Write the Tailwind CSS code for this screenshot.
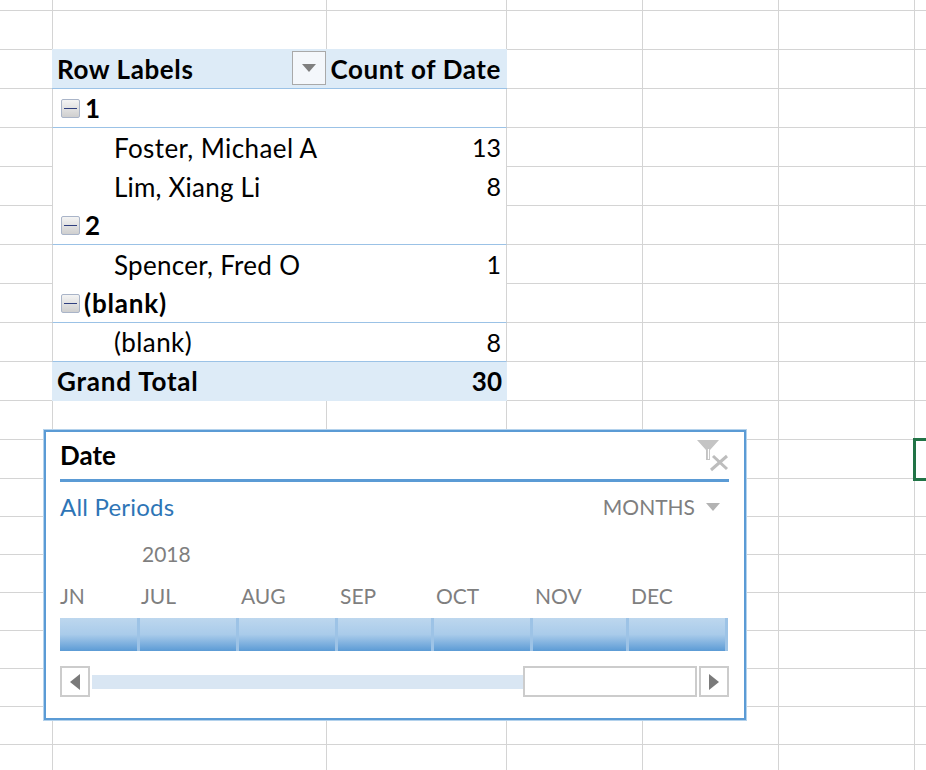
<!DOCTYPE html>
<html lang="en">
<head>
    <meta charset="UTF-8">
    <title>Pivot table and slicer</title>
    <script src="https://cdn.jsdelivr.net/npm/@tailwindcss/browser@4"></script>
</head>
<body class="bg-white" style="font-family:Lato,'Open Sans',sans-serif">
    <div class="relative w-[926px] h-[770px] overflow-hidden text-black">

        <!-- sheet gridlines -->
        <div class="absolute inset-0 flex flex-col">
            <div class="h-[11px] shrink-0 border-b border-[#d4d4d4]"></div>
            <div class="h-[39px] shrink-0 border-b border-[#d4d4d4]"></div>
            <div class="h-[39px] shrink-0 border-b border-[#d4d4d4]"></div>
            <div class="h-[39px] shrink-0 border-b border-[#d4d4d4]"></div>
            <div class="h-[39px] shrink-0 border-b border-[#d4d4d4]"></div>
            <div class="h-[39px] shrink-0 border-b border-[#d4d4d4]"></div>
            <div class="h-[39px] shrink-0 border-b border-[#d4d4d4]"></div>
            <div class="h-[39px] shrink-0 border-b border-[#d4d4d4]"></div>
            <div class="h-[39px] shrink-0 border-b border-[#d4d4d4]"></div>
            <div class="h-[39px] shrink-0 border-b border-[#d4d4d4]"></div>
            <div class="h-[39px] shrink-0 border-b border-[#d4d4d4]"></div>
            <div class="h-[39px] shrink-0 border-b border-[#d4d4d4]"></div>
            <div class="h-[39px] shrink-0 border-b border-[#d4d4d4]"></div>
            <div class="h-[38px] shrink-0 border-b border-[#d4d4d4]"></div>
            <div class="h-[38px] shrink-0 border-b border-[#d4d4d4]"></div>
            <div class="h-[38px] shrink-0 border-b border-[#d4d4d4]"></div>
            <div class="h-[38px] shrink-0 border-b border-[#d4d4d4]"></div>
            <div class="h-[38px] shrink-0 border-b border-[#d4d4d4]"></div>
            <div class="h-[38px] shrink-0 border-b border-[#d4d4d4]"></div>
            <div class="h-[38px] shrink-0 border-b border-[#d4d4d4]"></div>
        </div>
        <div class="absolute inset-0 flex">
            <div class="w-[53px] shrink-0 border-r border-[#d4d4d4]"></div>
            <div class="w-[274px] shrink-0 border-r border-[#d4d4d4]"></div>
            <div class="w-[180px] shrink-0 border-r border-[#d4d4d4]"></div>
            <div class="w-[136px] shrink-0 border-r border-[#d4d4d4]"></div>
            <div class="w-[136px] shrink-0 border-r border-[#d4d4d4]"></div>
            <div class="w-[136px] shrink-0 border-r border-[#d4d4d4]"></div>
        </div>

        <!-- pivot table -->
        <div class="absolute left-[52px] top-[49px] w-[455px] text-[26px] leading-none">
            <div class="h-[40px] flex items-center bg-[#ddebf7] border-b border-[#9bc2e6] font-bold tracking-[0.6px] pl-[5px] pr-[6px]">
                <span>Row Labels</span>
                <div class="ml-auto w-[34px] h-[34px] mt-[-1px] flex items-center justify-center bg-[#f4f7fb] border border-[#a9a9a9]">
                    <svg width="14" height="8" viewBox="0 0 14 8"><path d="M0 0H14L7 8Z" fill="#7f7f7f"/></svg>
                </div>
                <span class="ml-[5px]">Count of Date</span>
            </div>
            <div class="h-[39px] flex items-center bg-white border-x border-[#d4d4d4] border-b-[#9bc2e6] border-b font-bold pl-[8px]">
                <div class="w-[19px] h-[19px] mr-[5px] flex items-center justify-center rounded-[2px] border border-[#a9b4c8] bg-gradient-to-b from-[#f4f4f4] to-[#cfcfcf]"><div class="w-[13px] h-[1px] bg-[#2f3f7f]"></div></div>
                <span>1</span>
            </div>
            <div class="h-[39px] flex items-center justify-between bg-white border-x border-[#d4d4d4] pl-[61px] pr-[5px]"><span class="tracking-[0.4px]">Foster, Michael A</span><span class="text-[25px]">13</span></div>
            <div class="h-[39px] flex items-center justify-between bg-white border-x border-[#d4d4d4] pl-[61px] pr-[5px]"><span class="tracking-[0.2px]">Lim, Xiang Li</span><span class="text-[25px]">8</span></div>
            <div class="h-[39px] flex items-center bg-white border-x border-[#d4d4d4] border-b-[#9bc2e6] border-b font-bold pl-[8px]">
                <div class="w-[19px] h-[19px] mr-[5px] flex items-center justify-center rounded-[2px] border border-[#a9b4c8] bg-gradient-to-b from-[#f4f4f4] to-[#cfcfcf]"><div class="w-[13px] h-[1px] bg-[#2f3f7f]"></div></div>
                <span>2</span>
            </div>
            <div class="h-[39px] flex items-center justify-between bg-white border-x border-[#d4d4d4] pl-[61px] pr-[5px]"><span class="tracking-[0.3px]">Spencer, Fred O</span><span class="text-[25px]">1</span></div>
            <div class="h-[39px] flex items-center bg-white border-x border-[#d4d4d4] border-b-[#9bc2e6] border-b font-bold pl-[8px]">
                <div class="w-[19px] h-[19px] mr-[4px] flex items-center justify-center rounded-[2px] border border-[#a9b4c8] bg-gradient-to-b from-[#f4f4f4] to-[#cfcfcf]"><div class="w-[13px] h-[1px] bg-[#2f3f7f]"></div></div>
                <span class="tracking-[0.8px]">(blank)</span>
            </div>
            <div class="h-[39px] flex items-center justify-between bg-white border-x border-[#d4d4d4] border-b-[#9bc2e6] border-b pl-[61px] pr-[5px]"><span class="tracking-[0.4px]">(blank)</span><span class="text-[25px]">8</span></div>
            <div class="h-[39px] flex items-center justify-between bg-[#ddebf7] font-bold pl-[5px] pr-[5px] pb-[2px]"><span class="tracking-[0.8px]">Grand Total</span><span>30</span></div>
        </div>

        <!-- selected cell, mostly off the right edge -->
        <div class="absolute left-[913px] top-[438px] w-[30px] h-[43px] border-[3px] border-[#217346]"></div>

        <!-- date slicer -->
        <div class="absolute left-[44px] top-[430px] w-[702px] h-[290px] bg-white border-[2px] border-[#5b9bd5] outline outline-1 outline-[#b4d2ec] pl-[14px] pr-[15px] flex flex-col">
            <div class="h-[50px] shrink-0 flex items-center justify-between border-b-[3px] border-[#5b9bd5] pb-[1px]">
                <span class="text-[26px] font-bold leading-none">Date</span>
                <svg class="mt-[-1px]" width="34" height="34" viewBox="0 0 34 34">
                    <path d="M2 2H24L15 12V22H11V12Z" fill="#c4c4c4"/>
                    <path d="M13.5 11V21" stroke="#fff" stroke-width="1.2"/>
                    <path d="M16 32L32 18M18 18L32 31" stroke="#bdbdbd" stroke-width="3" fill="none"/>
                </svg>
            </div>
            <div class="h-[49px] shrink-0 flex items-center justify-between text-[24px] leading-none">
                <span class="text-[#2e75b6] tracking-[0.2px]">All Periods</span>
                <div class="flex items-center text-[21px] text-[#7f7f7f] mr-[9px]">
                    <span>MONTHS</span>
                    <svg class="ml-[11px]" width="14" height="8" viewBox="0 0 14 8"><path d="M0 0H14L7 8Z" fill="#b3b3b3"/></svg>
                </div>
            </div>
            <div class="h-[44px] shrink-0 flex items-center pl-[82px] text-[21px] leading-none text-[#7f7f7f]">2018</div>
            <div class="h-[41px] mb-[2px] shrink-0 flex items-center text-[21px] leading-none text-[#7f7f7f]">
                <span class="w-[81px] shrink-0">JN</span>
                <span class="w-[100px] shrink-0">JUL</span>
                <span class="w-[99px] shrink-0">AUG</span>
                <span class="w-[96px] shrink-0">SEP</span>
                <span class="w-[99px] shrink-0">OCT</span>
                <span class="w-[96px] shrink-0">NOV</span>
                <span>DEC</span>
            </div>
            <div class="h-[33px] w-[668px] shrink-0 flex">
                <div class="w-[80px] shrink-0 border-r-[3px] border-[#9dc3e6] bg-gradient-to-b from-[#bdd7ee] via-[#a9cbea] to-[#5b9bd5]"></div>
                <div class="w-[99px] shrink-0 border-r-[3px] border-[#9dc3e6] bg-gradient-to-b from-[#bdd7ee] via-[#a9cbea] to-[#5b9bd5]"></div>
                <div class="w-[99px] shrink-0 border-r-[3px] border-[#9dc3e6] bg-gradient-to-b from-[#bdd7ee] via-[#a9cbea] to-[#5b9bd5]"></div>
                <div class="w-[96px] shrink-0 border-r-[3px] border-[#9dc3e6] bg-gradient-to-b from-[#bdd7ee] via-[#a9cbea] to-[#5b9bd5]"></div>
                <div class="w-[99px] shrink-0 border-r-[3px] border-[#9dc3e6] bg-gradient-to-b from-[#bdd7ee] via-[#a9cbea] to-[#5b9bd5]"></div>
                <div class="w-[96px] shrink-0 border-r-[3px] border-[#9dc3e6] bg-gradient-to-b from-[#bdd7ee] via-[#a9cbea] to-[#5b9bd5]"></div>
                <div class="w-[99px] shrink-0 border-r-[3px] border-[#9dc3e6] bg-gradient-to-b from-[#bdd7ee] via-[#a9cbea] to-[#5b9bd5]"></div>
            </div>
            <div class="h-[31px] w-[669px] shrink-0 mt-[15px] flex items-center">
                <div class="w-[30px] h-[31px] shrink-0 flex items-center justify-center border-2 border-[#cccccc]">
                    <svg width="10" height="16" viewBox="0 0 10 16"><path d="M10 0V16L0 8Z" fill="#7a7a7a"/></svg>
                </div>
                <div class="w-[431px] h-[14px] shrink-0 ml-[2px] bg-[#d9e6f3]"></div>
                <div class="w-[174px] h-[31px] shrink-0 bg-white border-2 border-[#cccccc]"></div>
                <div class="w-[30px] h-[31px] shrink-0 ml-[2px] flex items-center justify-center border-2 border-[#cccccc]">
                    <svg width="10" height="16" viewBox="0 0 10 16"><path d="M0 0V16L10 8Z" fill="#7a7a7a"/></svg>
                </div>
            </div>
        </div>
    </div>
</body>
</html>
